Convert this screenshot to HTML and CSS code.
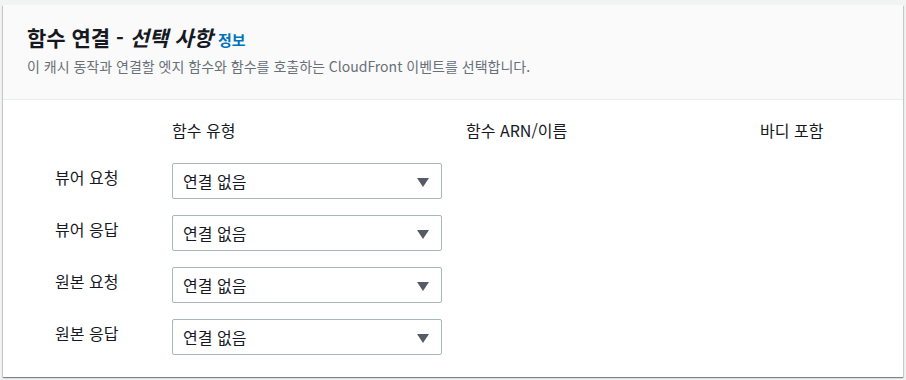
FILE: index.html
```html
<!DOCTYPE html>
<html lang="ko">
<head>
    <meta charset="UTF-8">
    <title>함수 연결</title>
    <link rel="stylesheet" href="styles.css">
</head>
<body>
    <div class="panel">
        <div class="panel-header">
            <h2 class="panel-title">함수 연결 - <em>선택 사항</em><a class="info-link" href="#">정보</a></h2>
            <p class="panel-desc">이 캐시 동작과 연결할 엣지 함수와 함수를 호출하는 CloudFront 이벤트를 선택합니다.</p>
        </div>
        <div class="panel-body">
            <div class="assoc-grid">
                <div></div>
                <div class="col-head">함수 유형</div>
                <div class="col-head">함수 ARN/이름</div>
                <div class="col-head">바디 포함</div>

                <div class="row-label">뷰어 요청</div>
                <div class="select">연결 없음<span class="caret"></span></div>
                <div></div>
                <div></div>

                <div class="row-label">뷰어 응답</div>
                <div class="select">연결 없음<span class="caret"></span></div>
                <div></div>
                <div></div>

                <div class="row-label">원본 요청</div>
                <div class="select">연결 없음<span class="caret"></span></div>
                <div></div>
                <div></div>

                <div class="row-label">원본 응답</div>
                <div class="select">연결 없음<span class="caret"></span></div>
                <div></div>
                <div></div>
            </div>
        </div>
    </div>
</body>
</html>
```

FILE: styles.css
```css
body {
    margin: 0;
    padding: 5px 3px 3px 3px;
    background-color: #f2f3f3;
    font-family: "Noto Sans CJK KR", "Noto Sans", sans-serif;
    color: #16191f;
}
.panel {
    background-color: #fff;
    box-shadow: 0 1px 1px 0 rgba(0,28,36,0.3), 1px 1px 1px 0 rgba(0,28,36,0.15), -1px 1px 1px 0 rgba(0,28,36,0.15);
}
.panel-header {
    background-color: #fafafa;
    border-bottom: 1px solid #eaeded;
    padding: 18px 24px 23px 24px;
}
.panel-title {
    margin: 0;
    font-size: 21px;
    font-weight: 700;
    line-height: 28px;
}
.panel-title em {
    font-style: italic;
}
.info-link {
    margin-left: 5px;
    font-size: 15px;
    font-weight: 700;
    line-height: 1;
    color: #0073bb;
    text-decoration: none;
}
.panel-desc {
    margin: 5px 0 0 0;
    font-size: 14px;
    line-height: 20px;
    color: #687078;
}
.panel-body {
    padding: 18px 0 22px 52px;
}
.assoc-grid {
    display: grid;
    grid-template-columns: 117px 294px 294px auto;
    row-gap: 16px;
    align-items: center;
}
.col-head {
    font-size: 16px;
    line-height: 24px;
    margin-bottom: 5px;
}
.row-label {
    font-size: 16px;
    line-height: 24px;
    margin-bottom: 8px;
}
.select {
    position: relative;
    width: 270px;
    height: 36px;
    box-sizing: border-box;
    border: 1px solid #aab7b8;
    border-radius: 2px;
    padding: 0 10px;
    font-size: 16px;
    line-height: 34px;
}
.caret {
    position: absolute;
    right: 12px;
    top: 14px;
    width: 0;
    height: 0;
    border-left: 6px solid transparent;
    border-right: 6px solid transparent;
    border-top: 9px solid #545b64;
}
```
